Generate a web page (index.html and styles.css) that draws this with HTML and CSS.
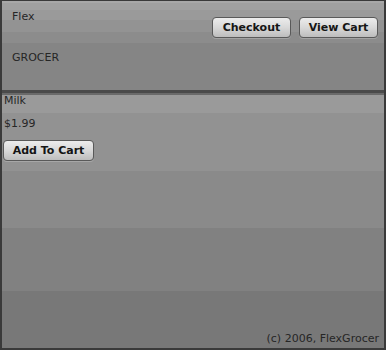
FILE: index.html
```html
<!DOCTYPE html>
<html lang="en">
<head>
    <meta charset="UTF-8">
    <title>FlexGrocer</title>
    <link rel="stylesheet" href="styles.css">
</head>
<body>
    <div class="app">
        <div class="header">
            <div class="brand">
                <div class="brand-top">Flex</div>
                <div class="brand-bottom">GROCER</div>
            </div>
            <div class="nav">
                <button class="btn nav-btn">Checkout</button>
                <button class="btn nav-btn">View Cart</button>
            </div>
        </div>
        <div class="divider"></div>
        <div class="main">
            <div class="product">
                <div class="product-name">Milk</div>
                <div class="product-price">$1.99</div>
                <button class="btn add-btn">Add To Cart</button>
            </div>
            <div class="footer">(c) 2006, FlexGrocer</div>
        </div>
    </div>
</body>
</html>
```

FILE: styles.css
```css
body {
    margin: 0;
    padding: 0;
    background-color: #777;
}
.app {
    width: 386px;
    height: 350px;
    box-sizing: border-box;
    border: 2px solid #3a3a3a;
    border-top-width: 1px;
    display: flex;
    flex-direction: column;
    font-family: 'DejaVu Sans', Verdana, sans-serif;
    font-size: 11px;
    color: #262626;
}
.header {
    height: 89px;
    flex: none;
    display: flex;
    justify-content: space-between;
    background: linear-gradient(to bottom,
        #a8a8a8 0, #a8a8a8 2px,
        #a0a0a0 2px, #a0a0a0 9px,
        #9a9a9a 9px, #9a9a9a 19px,
        #939393 19px, #939393 31px,
        #8c8c8c 31px, #8c8c8c 42px,
        #858585 42px, #858585 100%);
}
.brand {
    padding: 9px 0 0 10px;
}
.brand-top {
    line-height: 13px;
}
.brand-bottom {
    margin-top: 28px;
    line-height: 13px;
}
.nav {
    display: flex;
    gap: 8px;
    padding: 16px 6px 0 0;
}
.btn {
    font-family: 'DejaVu Sans', Verdana, sans-serif;
    font-size: 11px;
    font-weight: bold;
    color: #151515;
    height: 21px;
    padding: 0;
    border: 1px solid #595959;
    border-radius: 4px;
    background: linear-gradient(to bottom, #ececec 0%, #d8d8d8 50%, #bdbdbd 100%);
    box-shadow: 0 1px 0 rgba(255, 255, 255, 0.2);
    cursor: pointer;
}
.nav-btn {
    width: 79px;
}
.divider {
    height: 5px;
    flex: none;
    background: linear-gradient(to bottom, #4a4a4a 0, #4a4a4a 3px, #6a6a6a 3px, #6a6a6a 100%);
}
.main {
    flex: 1;
    display: flex;
    flex-direction: column;
    justify-content: space-between;
    background: linear-gradient(to bottom,
        #9a9a9a 0, #9a9a9a 18px,
        #929292 18px, #929292 76px,
        #8a8a8a 76px, #8a8a8a 133px,
        #818181 133px, #818181 196px,
        #787878 196px, #787878 100%);
}
.product {
    padding: 0 0 0 2px;
}
.product-name {
    line-height: 12px;
}
.product-price {
    margin-top: 11px;
    line-height: 12px;
}
.add-btn {
    margin-top: 10px;
    margin-left: -1px;
    width: 91px;
}
.footer {
    text-align: right;
    padding: 0 5px 3px 0;
    line-height: 13px;
}
```
